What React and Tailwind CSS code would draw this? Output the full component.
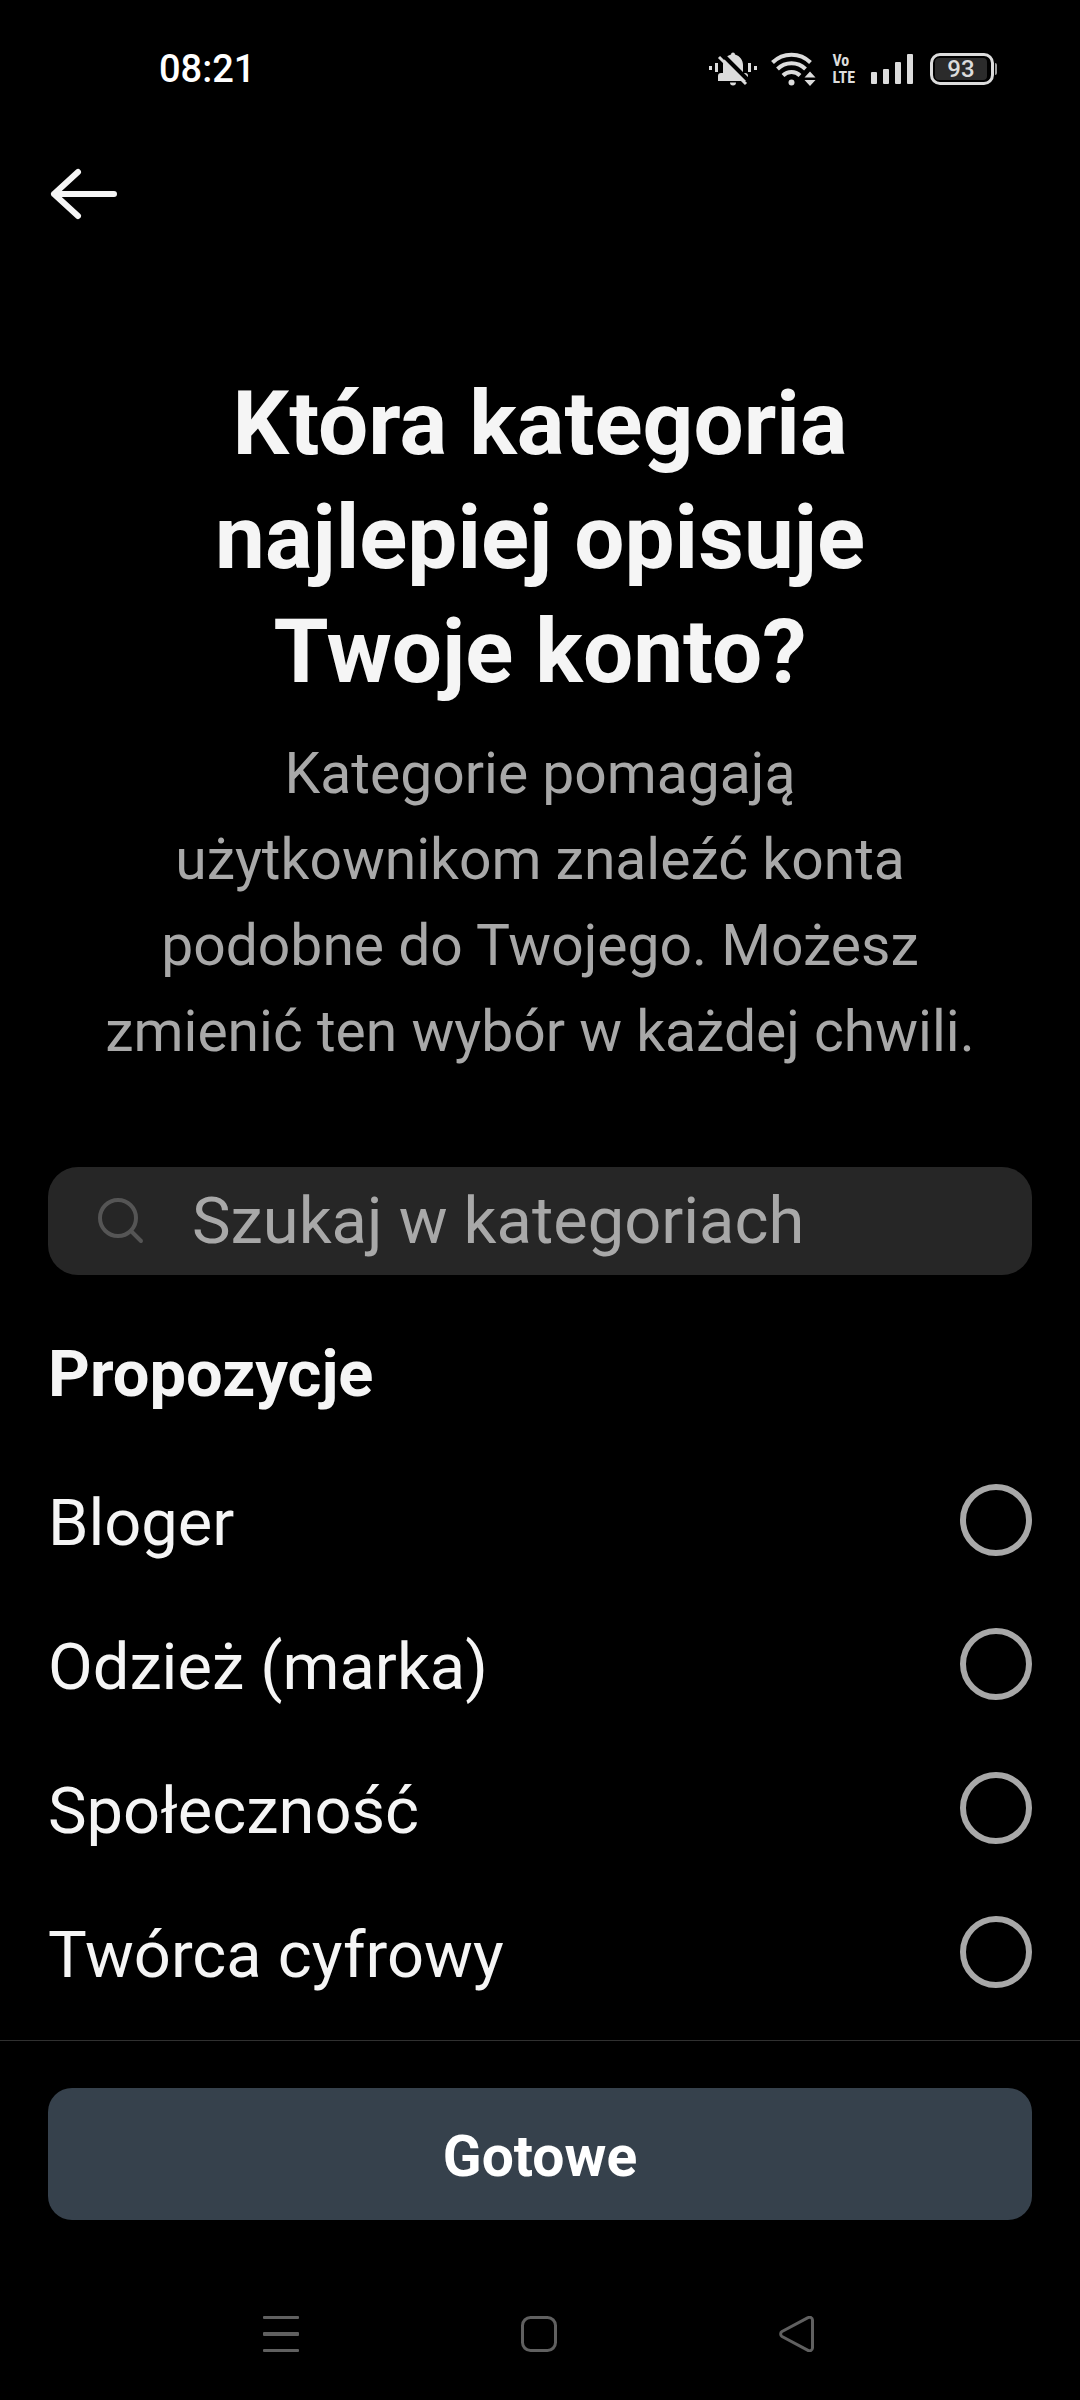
import { useState } from "react";

const categories = [
  { id: "bloger", label: "Bloger" },
  { id: "odziez", label: "Odzież (marka)" },
  { id: "spolecznosc", label: "Społeczność" },
  { id: "tworca", label: "Twórca cyfrowy" },
];

function MutedBellIcon() {
  return (
    <svg width="48" height="34" viewBox="0 0 48 34" fill="#dcdcdc">
      <rect x="0" y="14" width="3" height="4" />
      <rect x="6" y="11" width="3" height="9" />
      <rect x="39" y="11" width="3" height="9" />
      <rect x="45" y="14" width="3" height="4" />
      <path d="M9 29v-5a3 3 0 0 1 3-3h2v-8c0-5 3-9 8-10.500a2 2 0 0 1 4 0c5 1.500 8 5.500 8 10.500v8h2a3 3 0 0 1 3 3v5z" />
      <path d="M21 30.500h6a3 3 0 0 1-6 0z" />
      <path d="M12.500 1.500L41 30" stroke="#000" strokeWidth="4" />
      <path d="M10 5L37 32" stroke="#dcdcdc" strokeWidth="3" />
    </svg>
  );
}

function WifiIcon() {
  return (
    <svg width="45" height="34" viewBox="0 0 45 34">
      <g fill="none" stroke="#dcdcdc" strokeWidth="4">
        <path d="M1.500 10.500a27 27 0 0 1 38 0" />
        <path d="M6.500 17a20 20 0 0 1 28 0" />
        <path d="M12 23.500a12 12 0 0 1 17 0" />
      </g>
      <circle cx="20.500" cy="30.500" r="3" fill="#dcdcdc" />
      <path d="M33.500 25.500l5.500-6 5.500 6zM33.500 28h11l-5.500 6z" fill="#dcdcdc" />
    </svg>
  );
}

function SignalIcon() {
  return (
    <svg width="43" height="30" viewBox="0 0 43 30" fill="#dcdcdc">
      <rect x="0" y="18" width="6" height="12" rx="1" />
      <rect x="12" y="15" width="6" height="15" rx="1" />
      <rect x="24" y="8" width="6" height="22" rx="1" />
      <rect x="36" y="0" width="6" height="30" rx="1" />
    </svg>
  );
}

function Battery({ level }) {
  return (
    <div className="flex items-center gap-px">
      <div className="flex h-8 w-16 rounded-[10px] border-[3px] border-[#dcdcdc] py-[2px] pr-1 pl-[2px]">
        <span className="flex flex-1 items-center justify-center rounded-sm bg-[#2b2b2b] text-2xl leading-6 font-medium text-[#dcdcdc]">
          {level}
        </span>
      </div>
      <div className="h-3 w-[2px] rounded-r bg-[#a0a0a0]" />
    </div>
  );
}

function StatusBar() {
  return (
    <div className="flex h-[137px] items-center justify-between pr-[83px] pl-[159px]">
      <span className="text-[38px] leading-10 font-medium text-white">08:21</span>
      <div className="flex items-center">
        <MutedBellIcon />
        <span className="ml-[14px]">
          <WifiIcon />
        </span>
        <div className="ml-4 font-['Roboto_Condensed',Roboto,sans-serif] text-[16px] leading-[17px] font-bold text-[#dcdcdc]">
          <div>Vo</div>
          <div>LTE</div>
        </div>
        <span className="mr-4 ml-4">
          <SignalIcon />
        </span>
        <Battery level={93} />
      </div>
    </div>
  );
}

function CategoryRow({ category, checked, onChange }) {
  return (
    <label className="flex h-36 items-center justify-between">
      <span className="pt-1.5 text-[65px] leading-[76px]">{category.label}</span>
      <input
        type="radio"
        name="category"
        value={category.id}
        checked={checked}
        onChange={onChange}
        className="size-[72px] shrink-0 appearance-none rounded-full border-[6px] border-[#a8a8a8] checked:border-[22px] checked:border-[#0095f6]"
      />
    </label>
  );
}

function NavBar() {
  return (
    <nav className="flex items-center justify-between pt-24 pr-[265px] pb-12 pl-[263px] text-[#606060]">
      <button type="button" aria-label="Ostatnie">
        <svg width="36" height="36" viewBox="0 0 36 36" fill="currentColor">
          <rect y="0" width="36" height="3" rx="1" />
          <rect y="16" width="36" height="4" rx="1" />
          <rect y="33" width="36" height="3" rx="1" />
        </svg>
      </button>
      <button type="button" aria-label="Ekran główny">
        <svg width="36" height="36" viewBox="0 0 36 36" fill="none">
          <rect x="1.500" y="1.500" width="33" height="33" rx="8" stroke="currentColor" strokeWidth="3" />
        </svg>
      </button>
      <button type="button" aria-label="Wstecz">
        <svg width="36" height="36" viewBox="0 0 36 36" fill="none">
          <path
            d="M3 15.500L29 1.600a3 3 0 0 1 4.500 2.400v28a3 3 0 0 1-4.500 2.400L3 20.500a3 3 0 0 1 0-5z"
            stroke="currentColor"
            strokeWidth="3"
            strokeLinejoin="round"
          />
        </svg>
      </button>
    </nav>
  );
}

export default function App() {
  const [selected, setSelected] = useState(null);
  const [query, setQuery] = useState("");

  return (
    <div className="flex min-h-screen flex-col bg-black font-[Roboto,sans-serif] text-[#f5f5f5]">
      <StatusBar />

      <header className="px-12 pt-6">
        <button type="button" aria-label="Wróć" className="block">
          <svg width="72" height="66" viewBox="0 0 72 66" fill="none">
            <path
              d="M30 11L6 33l24 22M6 33h60"
              stroke="#f5f5f5"
              strokeWidth="6"
              strokeLinecap="round"
              strokeLinejoin="round"
            />
          </svg>
        </button>
      </header>

      <main className="flex-1 px-12 pb-[15px]">
        <div className="px-12 pt-[140px] text-center">
          <h1 className="px-16 text-[89px] leading-[114px] font-bold">
            Która kategoria najlepiej opisuje Twoje konto?
          </h1>
          <p className="mt-[22px] text-[57px] leading-[86px] text-[#a8a8a8]">
            Kategorie pomagają użytkownikom znaleźć konta podobne do Twojego. Możesz zmienić ten wybór
            w każdej chwili.
          </p>
        </div>

        <label className="mt-[92px] flex h-[108px] items-center rounded-[30px] bg-[#262626] pl-[50px]">
          <svg width="46" height="46" viewBox="0 0 46 46" fill="none" stroke="#555" strokeWidth="4">
            <circle cx="20" cy="20" r="18" />
            <path d="M33 33l10 10" strokeLinecap="round" />
          </svg>
          <input
            type="text"
            aria-label="Szukaj w kategoriach"
            placeholder="Szukaj w kategoriach"
            value={query}
            onChange={(e) => setQuery(e.target.value)}
            className="ml-12 min-w-0 flex-1 bg-transparent text-[65px] leading-[76px] outline-none placeholder:text-[#a8a8a8]"
          />
        </label>

        <h2 className="mt-[61px] mb-9 text-[65px] leading-[76px] font-bold">Propozycje</h2>

        {categories.map((category) => (
          <CategoryRow
            key={category.id}
            category={category}
            checked={selected === category.id}
            onChange={() => setSelected(category.id)}
          />
        ))}
      </main>

      <footer className="border-t border-[#303030] px-12 pt-[47px]">
        <button
          type="button"
          className="h-[132px] w-full rounded-3xl bg-[#36414c] pt-1.5 text-[57px] leading-[68px] font-bold text-white"
        >
          Gotowe
        </button>
      </footer>

      <NavBar />
    </div>
  );
}
